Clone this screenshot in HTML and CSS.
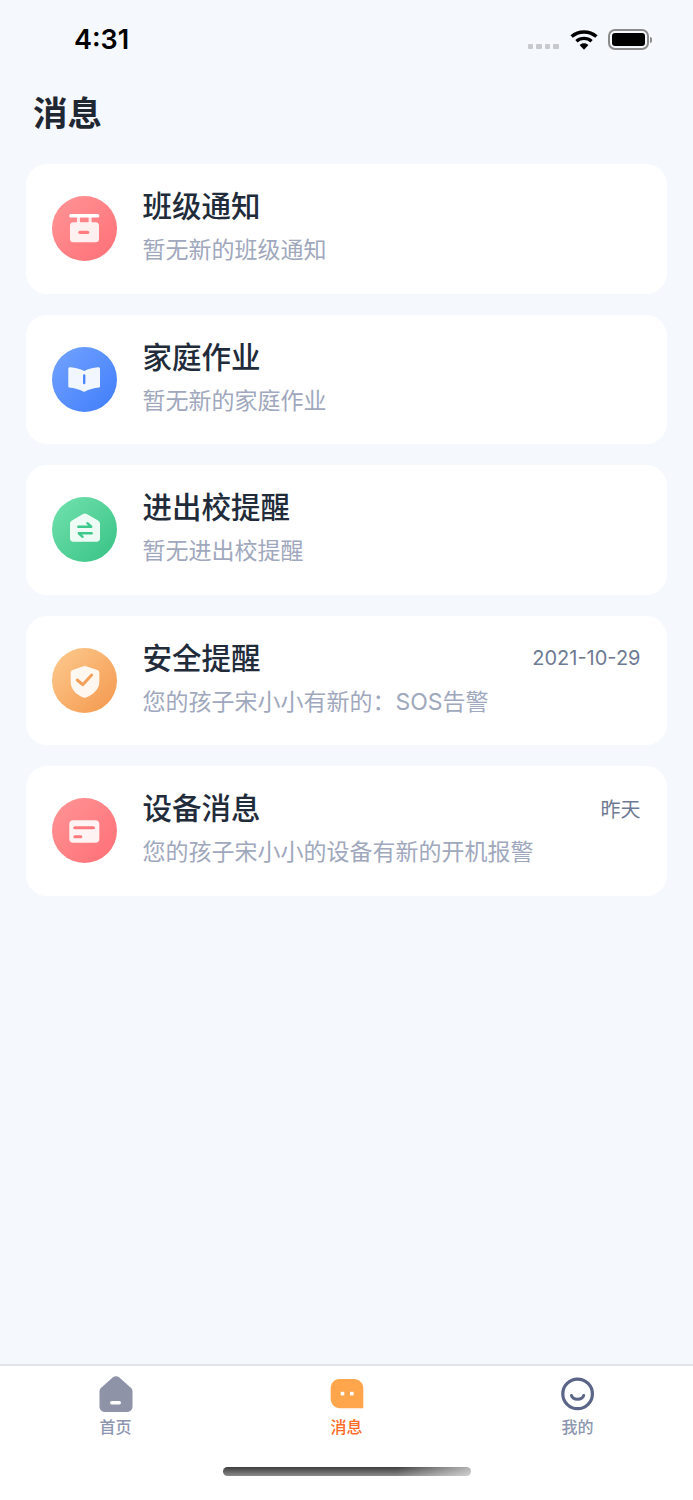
FILE: index.html
```html
<!DOCTYPE html>
<html lang="zh-CN">
<head>
  <meta charset="UTF-8" />
  <meta name="viewport" content="width=device-width, initial-scale=1.0" />
  <title>消息</title>
  <link rel="stylesheet" href="styles.css">
</head>
<body>
  <div class="page">
    <!-- Status bar -->
    <div class="status-bar">
      <span class="time">4:31</span>
      <div class="status-icons">
        <div class="signal"><i></i><i></i><i></i><i></i></div>
        <svg class="wifi" width="28" height="21" viewBox="0 0 28 21">
          <path d="M1.6 7.6C8.6 1.4 19.4 1.4 26.4 7.6" fill="none" stroke="#000" stroke-width="3.4"/>
          <path d="M6.4 12.2C10.8 8.4 17.2 8.4 21.6 12.2" fill="none" stroke="#000" stroke-width="3.4"/>
          <path d="M9.6 16 14 20.8 18.4 16C15.8 13.8 12.2 13.8 9.6 16Z" fill="#000"/>
        </svg>
        <div class="battery"><div class="battery-fill"></div></div>
        <div class="battery-cap"></div>
      </div>
    </div>

    <h1 class="page-title">消息</h1>

    <!-- Message list -->
    <div class="list">
      <div class="card">
        <div class="icon icon-red">
          <svg width="65" height="65" viewBox="0 0 65 65">
            <rect x="17.3" y="18" width="30" height="3.6" rx="1.6" fill="#fff"/>
            <rect x="25" y="21" width="3" height="6" fill="#fff" opacity=".8"/>
            <rect x="36.6" y="21" width="3" height="6" fill="#fff" opacity=".8"/>
            <rect x="18" y="26.3" width="29" height="20" rx="3.5" fill="#fff" opacity=".88"/>
            <rect x="26.3" y="34.7" width="11" height="3.4" rx="1.7" fill="#ff7b7f"/>
          </svg>
        </div>
        <div class="card-body">
          <div class="card-head"><span class="card-title">班级通知</span></div>
          <div class="card-sub">暂无新的班级通知</div>
        </div>
      </div>

      <div class="card">
        <div class="icon icon-blue">
          <svg width="65" height="65" viewBox="0 0 65 65">
            <path d="M16.3 21.8C16.3 20.6 17.2 20 18.4 20.2 23.4 20.8 28 21.8 32.2 24 36.4 21.8 41 20.8 46 20.2 47.2 20 48 20.6 48 21.8V39.4C48 40 47.6 40.4 47 40.5 41.6 41.2 37 42.4 33 44.4 32.4 44.7 31.8 44.7 31.2 44.4 27.2 42.4 22.6 41.2 17.3 40.5 16.7 40.4 16.3 40 16.3 39.4Z" fill="#fff" opacity=".92"/>
            <rect x="31" y="27.3" width="2.4" height="10" rx="1.2" fill="#4d87fc"/>
          </svg>
        </div>
        <div class="card-body">
          <div class="card-head"><span class="card-title">家庭作业</span></div>
          <div class="card-sub">暂无新的家庭作业</div>
        </div>
      </div>

      <div class="card">
        <div class="icon icon-green">
          <svg width="65" height="65" viewBox="0 0 65 65">
            <path d="M18 27C18 25.4 18.6 24.2 20 23.4L31 17C32.2 16.2 33.6 16.2 34.8 17L46 23.4C47.4 24.2 48 25.4 48 27V41.6C48 43.4 46.6 44.8 44.8 44.8H21.2C19.4 44.8 18 43.4 18 41.6Z" fill="#fff" opacity=".9"/>
            <path d="M26.3 29.7H39.2L35.4 26.2" fill="none" stroke="#3cc98b" stroke-width="2.4" stroke-linecap="round" stroke-linejoin="round"/>
            <path d="M39.7 36.3H26.8L30.6 39.8" fill="none" stroke="#3cc98b" stroke-width="2.4" stroke-linecap="round" stroke-linejoin="round"/>
          </svg>
        </div>
        <div class="card-body">
          <div class="card-head"><span class="card-title">进出校提醒</span></div>
          <div class="card-sub">暂无进出校提醒</div>
        </div>
      </div>

      <div class="card">
        <div class="icon icon-orange">
          <svg width="65" height="65" viewBox="0 0 65 65">
            <path d="M31.4 18.3C32.2 18 33.2 18 34 18.3L45.4 22C46.6 22.4 47.3 23.4 47.3 24.6V34C47.3 41.4 40.8 46.8 33.8 49.6 33 49.9 32.4 49.9 31.6 49.6 24.6 46.8 18.7 41.4 18.7 34V24.6C18.7 23.4 19.4 22.4 20.6 22Z" fill="#fff" opacity=".9"/>
            <path d="M25.3 32 30.7 36.7 39.7 27" fill="none" stroke="#f5a05a" stroke-width="3" stroke-linecap="round" stroke-linejoin="round"/>
          </svg>
        </div>
        <div class="card-body">
          <div class="card-head">
            <span class="card-title">安全提醒</span>
            <span class="card-date">2021-10-29</span>
          </div>
          <div class="card-sub">您的孩子宋小小有新的：SOS告警</div>
        </div>
      </div>

      <div class="card">
        <div class="icon icon-red">
          <svg width="65" height="65" viewBox="0 0 65 65">
            <rect x="17.3" y="22.3" width="30" height="22.4" rx="4" fill="#fff" opacity=".9"/>
            <rect x="21.3" y="28.2" width="21.7" height="3" rx="1.5" fill="#ff7b7f"/>
            <rect x="21.3" y="37.2" width="9" height="3" rx="1.5" fill="#ff7b7f"/>
          </svg>
        </div>
        <div class="card-body">
          <div class="card-head">
            <span class="card-title">设备消息</span>
            <span class="card-date">昨天</span>
          </div>
          <div class="card-sub">您的孩子宋小小的设备有新的开机报警</div>
        </div>
      </div>
    </div>

    <!-- Tab bar -->
    <div class="tabbar">
      <div class="tabs">
        <div class="tab">
          <div class="tab-icon">
            <svg width="34" height="36" viewBox="0 0 34 36">
              <path d="M.5 15.5C.5 14 1 12.8 2.2 11.7L13.6 1.6C15.6-.1 18.4-.1 20.4 1.6L31.8 11.7C33 12.8 33.5 14 33.5 15.5V30.5C33.5 33.6 31.2 36 28 36H6C2.8 36 .5 33.6.5 30.5Z" fill="#8e93a8"/>
              <rect x="11" y="25" width="11" height="3.6" rx="1.8" fill="#fff"/>
            </svg>
          </div>
          <span class="tab-label">首页</span>
        </div>
        <div class="tab tab-active">
          <div class="tab-icon">
            <svg width="34" height="36" viewBox="0 0 34 36">
              <path d="M9.500 3H24C29 3 33.300 7 33.300 12V32.300H10C5 32.300.7 28 .7 23V12C.7 7 4.500 3 9.500 3Z" fill="#ffa64d"/>
              <rect x="10.700" y="15.800" width="3.600" height="3.600" fill="#fff"/>
              <rect x="20" y="15.800" width="3.600" height="3.600" fill="#fff"/>
            </svg>
          </div>
          <span class="tab-label">消息</span>
        </div>
        <div class="tab">
          <div class="tab-icon">
            <svg width="34" height="36" viewBox="0 0 34 36">
              <circle cx="16.600" cy="17.900" r="14.800" fill="none" stroke="#5b6587" stroke-width="3.200"/>
              <path d="M10.500 19.500C12 24.500 21 24.500 22.700 19.500" fill="none" stroke="#5b6587" stroke-width="3" stroke-linecap="round"/>
            </svg>
          </div>
          <span class="tab-label">我的</span>
        </div>
      </div>
      <div class="home-bar"></div>
    </div>
  </div>
</body>
</html>
```

FILE: styles.css
```css
* { margin: 0; padding: 0; box-sizing: border-box; }
body {
  font-family: "Noto Sans CJK SC", "Noto Sans", sans-serif;
  background: #f5f8fd;
}
.page {
  display: flex;
  flex-direction: column;
  height: 1500px;
}

/* status bar */
.status-bar {
  display: flex;
  justify-content: space-between;
  height: 87px;
  padding: 23px 41px 0 74px;
}
.time {
  font-family: Inter, "Liberation Sans", sans-serif;
  font-size: 27px;
  font-weight: 600;
  line-height: 34px;
  color: #000;
}
.status-icons {
  display: flex;
  align-items: flex-start;
  padding-top: 6px;
}
.signal {
  display: flex;
  gap: 3px;
  margin-top: 15px;
  margin-right: 11px;
}
.signal i {
  width: 5.5px;
  height: 5px;
  border-radius: 1px;
  background: #c7c9cc;
}
.wifi { margin-right: 10px; }
.battery {
  width: 41px;
  height: 21px;
  padding: 2px;
  border: 2px solid #8b8b8b;
  border-radius: 7px;
}
.battery-fill {
  height: 100%;
  border-radius: 3px;
  background: #000;
}
.battery-cap {
  width: 2.5px;
  height: 6px;
  margin-top: 7.5px;
  margin-left: 1px;
  border-radius: 0 2px 2px 0;
  background: #8b8b8b;
}

.page-title {
  margin-left: 33px;
  font-size: 34.5px;
  font-weight: 700;
  line-height: 48px;
  color: #1f2733;
}

/* message cards */
.list {
  flex: 1;
  display: flex;
  flex-direction: column;
  gap: 21px;
  padding: 29px 26px 0;
}
.card {
  display: flex;
  align-items: center;
  gap: 25.5px;
  height: 129.5px;
  padding: 0 26.500px 0 26px;
  border-radius: 21px;
  background: #fff;
}
.icon {
  flex: none;
  width: 65px;
  height: 65px;
  border-radius: 50%;
}
.icon svg { display: block; }
.icon-red { background: linear-gradient(135deg, #ff9597, #ff6f75); }
.icon-blue { background: linear-gradient(135deg, #74a3ff, #3f7dfb); }
.icon-green { background: linear-gradient(135deg, #74e2ae, #36c284); }
.icon-orange { background: linear-gradient(135deg, #fdcb8f, #f4974c); }
.card-body {
  flex: 1;
  display: flex;
  flex-direction: column;
  gap: 4px;
  padding-bottom: 3px;
}
.card-head {
  display: flex;
  justify-content: space-between;
  align-items: center;
  height: 42px;
}
.card-title {
  font-size: 29.5px;
  font-weight: 500;
  color: #212b3a;
}
.card-date {
  padding-top: 4px;
  font-family: Inter, "Noto Sans CJK SC", sans-serif;
  font-size: 20px;
  color: #6f7a94;
}
.card-sub {
  font-family: Inter, "Noto Sans CJK SC", sans-serif;
  font-size: 23px;
  line-height: 42px;
  color: #a0a8bd;
}

/* tab bar */
.tabbar {
  height: 136px;
  border-top: 2px solid #e0e3e8;
  background: #fff;
}
.tabs { display: flex; }
.tab {
  flex: 1;
  display: flex;
  flex-direction: column;
  align-items: center;
}
.tab-icon {
  height: 36px;
  margin-top: 10px;
}
.tab-icon svg { display: block; }
.tab-label {
  margin-top: 2px;
  font-size: 16px;
  font-weight: 500;
  line-height: 24px;
  color: #8d96ae;
}
.tab-active .tab-label { color: #ff6a26; }
.home-bar {
  width: 248px;
  height: 9px;
  margin: 29px 0 0 223px;
  border-radius: 5px;
  background: linear-gradient(to right, rgba(255, 255, 255, 0) 70%, rgba(255, 255, 255, .6) 100%), linear-gradient(to bottom, #3e3e3e, #8a8a8a);
}
```
